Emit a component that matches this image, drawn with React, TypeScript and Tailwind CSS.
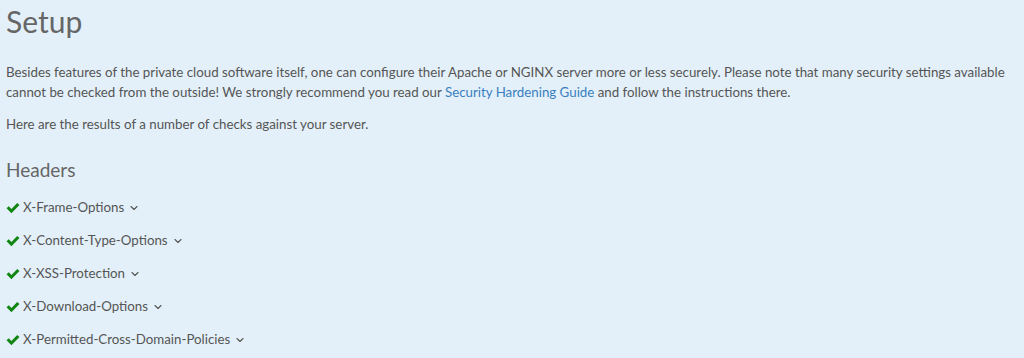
import { ChevronDown } from 'lucide-react';

const headers = [
  'X-Frame-Options',
  'X-Content-Type-Options',
  'X-XSS-Protection',
  'X-Download-Options',
  'X-Permitted-Cross-Domain-Policies',
];

function Check() {
  return (
    <svg viewBox="0 0 16 16" className="w-[14px] h-[14px] text-[#118611]" fill="currentColor">
      <path d="M0.6 8.4 L3.2 6 L6.2 9 L12.8 2.2 L15.4 4.6 L6.2 14 Z" />
    </svg>
  );
}

export default function App() {
  return (
    <div className="min-h-[358px] bg-[#e3f0f9] px-[6px] text-[#555] font-['Lato','Open_Sans',sans-serif]">
      <h1 className="text-[30px] leading-[40px] pt-[1px] text-[#666] font-normal">Setup</h1>
      <p className="mt-[21px] text-[13.3px] leading-[20px]">
        Besides features of the private cloud software itself, one can configure their Apache or NGINX server more or less securely. Please note that many security settings available cannot be checked from the outside! We strongly recommend you read our{' '}
        <a className="text-[#3a7fc0]">Security Hardening Guide</a> and follow the instructions there.
      </p>
      <p className="mt-[12px] text-[13.3px] leading-[20px]">Here are the results of a number of checks against your server.</p>
      <h2 className="mt-[23px] text-[19px] leading-[26px] text-[#666]">Headers</h2>
      <ul className="mt-[8px] text-[13.3px]">
        {headers.map((h) => (
          <li key={h} className="flex items-center gap-[3px] h-[33px]">
            <Check />
            <span>{h}</span>
            <ChevronDown className="w-[12px] h-[12px] ml-[1px]" strokeWidth={2.2} />
          </li>
        ))}
      </ul>
    </div>
  );
}
